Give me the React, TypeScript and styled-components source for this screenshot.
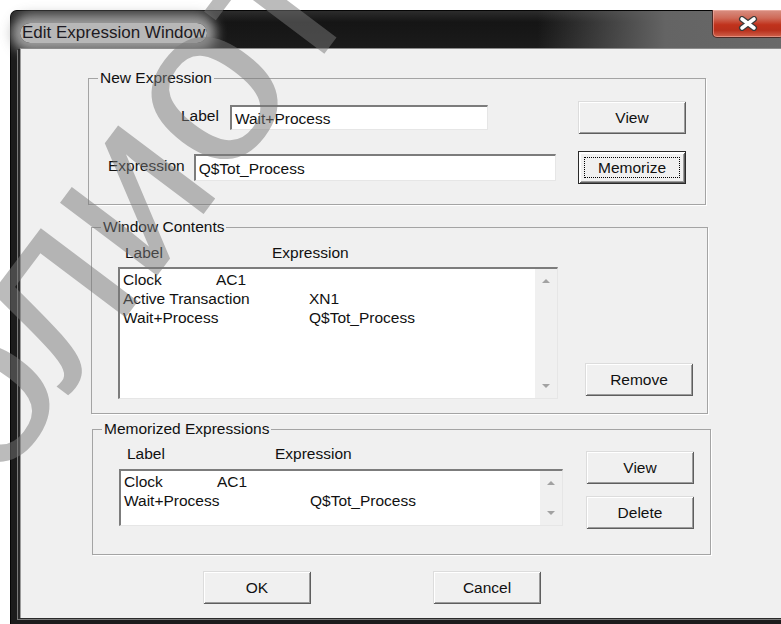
import React from 'react'
import styled, { createGlobalStyle } from 'styled-components'

const GlobalStyle = createGlobalStyle`
    html, body {
        margin: 0;
        padding: 0;
        background: #fff;
    }
    body {
        font-family: "Liberation Sans", Arial, sans-serif;
        color: #000;
    }
`

const Screen = styled.div`
    position: relative;
    width: 781px;
    height: 624px;
    overflow: hidden;
    background: #fff;
    padding: 10px 0 0 10px;
    box-sizing: border-box;
`

const Frame = styled.div`
    width: 800px;
    height: 614px;
    display: flex;
    flex-direction: column;
    background: #1c1c1c;
    border: 1px solid #050505;
    border-bottom: none;
    border-radius: 7px 7px 0 0;
    box-sizing: border-box;
`

const TitleBar = styled.div`
    height: 37px;
    display: flex;
    align-items: flex-start;
    background:
        linear-gradient(to right, rgba(110, 110, 110, 0) 0%, rgba(110, 110, 110, 0) 66%, rgba(100, 100, 100, 1) 82%, #6a6a6a 100%),
        linear-gradient(#2c2c2c, #151515 30%, #1b1b1b);
    border-radius: 6px 6px 0 0;
`

const Caption = styled.span`
    margin: 12px 0 0 9px;
    padding: 0 2px;
    font-size: 17px;
    line-height: 20px;
    color: #1d1a22;
    background: rgba(192, 192, 192, 0.95);
    border-radius: 12px;
    box-shadow: 0 0 12px 9px rgba(180, 180, 180, 0.85);
`

const CloseButton = styled.div`
    margin-left: auto;
    margin-right: 25px;
    margin-top: -1px;
    width: 70px;
    height: 27px;
    display: flex;
    align-items: center;
    justify-content: center;
    border: 1px solid #4a2a26;
    border-top: none;
    border-radius: 0 0 5px 5px;
    background: linear-gradient(#d88f82 0%, #cf6a58 30%, #c0321c 55%, #b8301c 75%, #d0624c 100%);
    box-shadow: inset 0 0 0 1px rgba(255, 200, 190, 0.45);
`

const Client = styled.div`
    flex: 1;
    margin: 0 0 6px 9px;
    background: #f0f0f0;
    border-top: 1px solid #8c8c8c;
    border-left: 1px solid #9a9a9a;
    box-shadow: -2px 1px 0 0 #2a2a2a, -3px 2px 0 0 #7a7a7a;
    padding-top: 20px;
    box-sizing: border-box;
    font-size: 15.5px;
    color: #111;
`

const GroupBox = styled.fieldset<{ $indent: number; $width: number; $gap: number }>`
    margin: ${p => p.$gap}px 0 0 ${p => p.$indent}px;
    width: ${p => p.$width}px;
    min-width: 0;
    padding: 0;
    border: 1px solid #a4a4a4;
    box-shadow: 1px 1px 0 #fff;
    box-sizing: border-box;
`

const Legend = styled.legend`
    margin-left: 9px;
    padding: 0 2px;
    line-height: 18px;
`

const FieldRows = styled.div`
    display: flex;
    flex-direction: column;
    gap: 17px;
    padding: 14px 0 20px;
`

const FieldRow = styled.div`
    display: grid;
    grid-template-columns: 489px 108px;
    align-items: center;
    height: 33px;
`

const FieldCell = styled.div<{ $lead: number; $gap: number }>`
    display: flex;
    align-items: center;
    padding-left: ${p => p.$lead}px;
    gap: ${p => p.$gap}px;
`

const FieldLabel = styled.span`
    line-height: 18px;
    margin-bottom: 3px;
`

const TextBox = styled.input<{ $width: number; $height: number }>`
    width: ${p => p.$width}px;
    height: ${p => p.$height}px;
    margin: 0;
    padding: 1px 3px 0;
    box-sizing: border-box;
    font: inherit;
    color: #111;
    background: #fff;
    border-style: solid;
    border-width: 2px 1px 1px 2px;
    border-color: #7c7c7c #e6e6e6 #e6e6e6 #7c7c7c;
    outline: none;
`

const Button = styled.button<{ $default?: boolean }>`
    width: 108px;
    height: 33px;
    margin: 0;
    padding: 0;
    display: flex;
    align-items: center;
    justify-content: center;
    font: inherit;
    color: #111;
    background: #f0f0f0;
    border: ${p => (p.$default ? '1px solid #2a2a2a' : 'none')};
    box-sizing: border-box;
    box-shadow:
        inset 1px 1px 0 ${p => (p.$default ? '#fff' : '#dcdcdc')},
        inset -1px -1px 0 #5e5e5e,
        inset 2px 2px 0 #fff,
        inset -2px -2px 0 #9c9c9c;
`

const FocusRing = styled.span`
    display: flex;
    align-items: center;
    justify-content: center;
    width: calc(100% - 10px);
    height: calc(100% - 10px);
    border: 1px dotted #000;
    box-sizing: border-box;
`

const ListSection = styled.div<{ $top: number; $bottom: number }>`
    display: grid;
    grid-template-columns: 467px 108px;
    padding: ${p => p.$top}px 0 ${p => p.$bottom}px 26px;
`

const ListColumn = styled.div<{ $gap: number }>`
    display: flex;
    flex-direction: column;
    gap: ${p => p.$gap}px;
`

const HeaderRow = styled.div<{ $lead: number; $split: number }>`
    display: grid;
    grid-template-columns: ${p => p.$split}px auto;
    padding-left: ${p => p.$lead}px;
    line-height: 18px;
`

const ListBox = styled.div<{ $width: number; $height: number }>`
    display: flex;
    width: ${p => p.$width}px;
    height: ${p => p.$height}px;
    background: #fff;
    border-style: solid;
    border-width: 2px 1px 1px 2px;
    border-color: #7c7c7c #e6e6e6 #e6e6e6 #7c7c7c;
    box-sizing: border-box;
`

const ListRows = styled.div`
    flex: 1;
    padding: 1px 3px;
    line-height: 19px;
    white-space: pre;
    tab-size: 93px;
    overflow: hidden;
`

const ScrollTrack = styled.div`
    width: 22px;
    display: flex;
    flex-direction: column;
    justify-content: space-between;
    background: #f0f0f0;
`

const ScrollStep = styled.div`
    height: 24px;
    display: flex;
    align-items: center;
    justify-content: center;
`

const Arrow = styled.span<{ $down?: boolean }>`
    width: 0;
    height: 0;
    border-left: 4px solid transparent;
    border-right: 4px solid transparent;
    ${p => (p.$down ? 'border-top: 4px solid #a2a2a2;' : 'border-bottom: 4px solid #a2a2a2;')}
`

const SideButtons = styled.div<{ $align: 'start' | 'end'; $offset: number }>`
    display: flex;
    flex-direction: column;
    gap: 12px;
    align-self: ${p => p.$align};
    ${p => (p.$align === 'start' ? `padding-top: ${p.$offset}px;` : `padding-bottom: ${p.$offset}px;`)}
`

const Footer = styled.div`
    display: flex;
    gap: 122px;
    padding-left: 182px;
    margin-top: 16px;
`

const Watermark = styled.div`
    position: absolute;
    left: -226px;
    top: 538px;
    font: 230px/1 "Liberation Sans", sans-serif;
    color: rgba(120, 120, 120, 0.5);
    white-space: nowrap;
    transform: rotate(-53deg);
    transform-origin: 0 50%;
    pointer-events: none;
`

type Entry = [string, string]

const windowContents: Entry[] = [
    ['Clock', 'AC1'],
    ['Active Transaction', 'XN1'],
    ['Wait+Process', 'Q$Tot_Process'],
]

const memorized: Entry[] = [
    ['Clock', 'AC1'],
    ['Wait+Process', 'Q$Tot_Process'],
]

const CloseGlyph = () => (
    <svg width="20" height="15" viewBox="0 0 20 15">
        <path d="M4 3 L16 12 M16 3 L4 12" stroke="#3a3a3a" strokeWidth="6" strokeLinecap="round" />
        <path d="M4 3 L16 12 M16 3 L4 12" stroke="#fff" strokeWidth="3.6" strokeLinecap="round" />
    </svg>
)

const ExpressionList = ({ entries, width, height }: { entries: Entry[]; width: number; height: number }) => (
    <ListBox $width={width} $height={height}>
        <ListRows>
            {entries.map(([label, expr]) => (
                <div key={label}>{`${label}\t${expr}`}</div>
            ))}
        </ListRows>
        <ScrollTrack>
            <ScrollStep><Arrow /></ScrollStep>
            <ScrollStep><Arrow $down /></ScrollStep>
        </ScrollTrack>
    </ListBox>
)

const App = () => {
    return (
        <Screen>
            <GlobalStyle />
            <Frame>
                <TitleBar>
                    <Caption>Edit Expression Window</Caption>
                    <CloseButton><CloseGlyph /></CloseButton>
                </TitleBar>
                <Client>
                    <GroupBox $indent={67} $width={618} $gap={0}>
                        <Legend>New Expression</Legend>
                        <FieldRows>
                            <FieldRow>
                                <FieldCell $lead={92} $gap={11}>
                                    <FieldLabel>Label</FieldLabel>
                                    <TextBox $width={258} $height={25} readOnly defaultValue="Wait+Process" />
                                </FieldCell>
                                <Button>View</Button>
                            </FieldRow>
                            <FieldRow>
                                <FieldCell $lead={19} $gap={9}>
                                    <FieldLabel>Expression</FieldLabel>
                                    <TextBox $width={362} $height={27} readOnly defaultValue="Q$Tot_Process" />
                                </FieldCell>
                                <Button $default>
                                    <FocusRing>Memorize</FocusRing>
                                </Button>
                            </FieldRow>
                        </FieldRows>
                    </GroupBox>

                    <GroupBox $indent={70} $width={617} $gap={13}>
                        <Legend>Window Contents</Legend>
                        <ListSection $top={8} $bottom={14}>
                            <ListColumn $gap={5}>
                                <HeaderRow $lead={7} $split={147}>
                                    <span>Label</span>
                                    <span>Expression</span>
                                </HeaderRow>
                                <ExpressionList entries={windowContents} width={440} height={132} />
                            </ListColumn>
                            <SideButtons $align="end" $offset={3}>
                                <Button>Remove</Button>
                            </SideButtons>
                        </ListSection>
                    </GroupBox>

                    <GroupBox $indent={71} $width={619} $gap={6}>
                        <Legend>Memorized Expressions</Legend>
                        <ListSection $top={7} $bottom={25}>
                            <ListColumn $gap={6}>
                                <HeaderRow $lead={8} $split={148}>
                                    <span>Label</span>
                                    <span>Expression</span>
                                </HeaderRow>
                                <ExpressionList entries={memorized} width={444} height={57} />
                            </ListColumn>
                            <SideButtons $align="start" $offset={6}>
                                <Button>View</Button>
                                <Button>Delete</Button>
                            </SideButtons>
                        </ListSection>
                    </GroupBox>

                    <Footer>
                        <Button>OK</Button>
                        <Button>Cancel</Button>
                    </Footer>
                </Client>
            </Frame>
            <Watermark>библиотека</Watermark>
        </Screen>
    )
}

export default App
